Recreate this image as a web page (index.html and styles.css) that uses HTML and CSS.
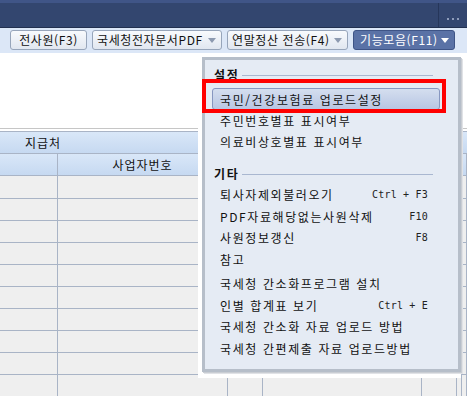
FILE: index.html
```html
<!DOCTYPE html>
<html lang="ko">
<head>
    <meta charset="UTF-8">
    <title>연말정산</title>
    <link rel="stylesheet" href="styles.css">
</head>
<body>
    <div class="titlebar">
        <div class="more"><i></i><i></i><i></i></div>
    </div>

    <div class="toolbar">
        <button class="tb-btn btn-all">전사원(F3)</button>
        <button class="tb-btn btn-pdf">국세청전자문서PDF <span class="arrow"></span></button>
        <button class="tb-btn btn-send">연말정산 전송(F4) <span class="arrow"></span></button>
        <button class="tb-btn btn-func">기능모음(F11) <span class="arrow"></span></button>
    </div>

    <div class="blank"></div>

    <div class="sheet">
        <div class="row head-top"><span class="payee">지급처</span></div>
        <div class="row head-sub">
            <div class="cell"></div>
            <div class="cell center">사업자번호</div>
            <div class="cell"></div><div class="cell"></div><div class="cell"></div><div class="cell"></div><div class="cell"></div>
        </div>
        <!-- 데이터 행 -->
        <div class="row data first"><div class="cell"></div><div class="cell"></div><div class="cell"></div><div class="cell"></div><div class="cell"></div><div class="cell"></div><div class="cell"></div></div>
        <div class="row data"><div class="cell"></div><div class="cell"></div><div class="cell"></div><div class="cell"></div><div class="cell"></div><div class="cell"></div><div class="cell"></div></div>
        <div class="row data"><div class="cell"></div><div class="cell"></div><div class="cell"></div><div class="cell"></div><div class="cell"></div><div class="cell"></div><div class="cell"></div></div>
        <div class="row data"><div class="cell"></div><div class="cell"></div><div class="cell"></div><div class="cell"></div><div class="cell"></div><div class="cell"></div><div class="cell"></div></div>
        <div class="row data"><div class="cell"></div><div class="cell"></div><div class="cell"></div><div class="cell"></div><div class="cell"></div><div class="cell"></div><div class="cell"></div></div>
        <div class="row data"><div class="cell"></div><div class="cell"></div><div class="cell"></div><div class="cell"></div><div class="cell"></div><div class="cell"></div><div class="cell"></div></div>
        <div class="row data"><div class="cell"></div><div class="cell"></div><div class="cell"></div><div class="cell"></div><div class="cell"></div><div class="cell"></div><div class="cell"></div></div>
        <div class="row data"><div class="cell"></div><div class="cell"></div><div class="cell"></div><div class="cell"></div><div class="cell"></div><div class="cell"></div><div class="cell"></div></div>
        <div class="row data"><div class="cell"></div><div class="cell"></div><div class="cell"></div><div class="cell"></div><div class="cell"></div><div class="cell"></div><div class="cell"></div></div>
        <div class="row data"><div class="cell"></div><div class="cell"></div><div class="cell"></div><div class="cell"></div><div class="cell"></div><div class="cell"></div><div class="cell"></div></div>
    </div>

    <!-- 기능모음 드롭다운 -->
    <div class="popup">
        <div class="menu">
            <div class="menu-head">설정</div>
            <div class="menu-item active">국민/건강보험료 업로드설정</div>
            <div class="menu-item short">주민번호별표 표시여부</div>
            <div class="menu-item short">의료비상호별표 표시여부</div>

            <div class="menu-head gap">기타</div>
            <div class="menu-item">퇴사자제외불러오기 <span class="key">Ctrl + F3</span></div>
            <div class="menu-item">PDF자료해당없는사원삭제 <span class="key">F10</span></div>
            <div class="menu-item">사원정보갱신 <span class="key">F8</span></div>
            <div class="menu-item">참고</div>

            <div class="menu-item sep">국세청 간소화프로그램 설치</div>
            <div class="menu-item">인별 합계표 보기 <span class="key">Ctrl + E</span></div>
            <div class="menu-item">국세청 간소화 자료 업로드 방법</div>
            <div class="menu-item">국세청 간편제출 자료 업로드방법</div>
        </div>
        <div class="mark"></div>
    </div>
</body>
</html>
```

FILE: styles.css
```css
html, body {
    margin: 0;
    padding: 0;
}

body {
    width: 467px;
    height: 396px;
    overflow: hidden;
    position: relative;
    background: #fff;
    color: #111;
    font-family: "Noto Sans CJK KR", "Noto Sans", sans-serif;
    font-size: 12px;
    letter-spacing: 1px;
}

/* 상단 바 */
.titlebar {
    height: 28px;
    box-sizing: border-box;
    background: #33466f;
    border-top: 3px solid #405587;
    border-bottom: 1px solid #22304f;
    display: flex;
    justify-content: flex-end;
}

.more {
    width: 28px;
    border-left: 1px solid #26365a;
    display: flex;
    justify-content: center;
    align-items: center;
    gap: 3px;
    padding-top: 7px;
}

.more i {
    width: 2px;
    height: 2px;
    background: #8e9cba;
}

/* 툴바 */
.toolbar {
    height: 25px;
    box-sizing: border-box;
    background: #dce7f7;
    padding: 2px 0 0 10px;
    display: flex;
    gap: 5px;
    align-items: flex-start;
}

.tb-btn {
    height: 20px;
    box-sizing: border-box;
    border: 1px solid #97a5ba;
    border-radius: 3px;
    background: linear-gradient(#f8fafd, #e1e7f0);
    font-family: inherit;
    font-size: 12px;
    letter-spacing: 0.6px;
    white-space: nowrap;
    color: #111;
    padding: 0 5px 0 4px;
    display: flex;
    align-items: center;
    justify-content: space-between;
    line-height: 18px;
}

.btn-all { width: 77px; justify-content: center; padding: 0; }
.btn-pdf { width: 130px; }
.btn-send { width: 121px; }
.btn-func {
    width: 102px;
    background: #5a72a6;
    border-color: #3e5486;
    color: #fff;
    padding-left: 6px;
}

.arrow {
    flex-shrink: 0;
    width: 0;
    height: 0;
    border-left: 4.5px solid transparent;
    border-right: 4.5px solid transparent;
    border-top: 5px solid #8d9ab0;
}

.btn-func .arrow {
    border-top-color: #fff;
}

/* 빈 영역 */
.blank {
    height: 75px;
    border-bottom: 1px solid #c6c6c6;
    margin-bottom: 2px;
}

/* 표 */
.sheet {
    border-top: 1px solid #a9b4c6;
}

.row {
    display: grid;
    grid-template-columns: 58px 170px 35px 159px 35px 5px 1fr;
    border-bottom: 1px solid #a9b4c6;
    height: 22px;
    box-sizing: border-box;
}

.head-top,
.head-sub {
    background: linear-gradient(#d9e7f8, #c6d9f1);
}

.head-top {
    display: block;
    line-height: 21px;
}

.payee {
    padding-left: 25px;
}

.head-sub .cell {
    line-height: 21px;
}

.cell {
    border-right: 1px solid #a9b4c6;
}

.center {
    text-align: center;
}

.data {
    background: #efefef;
}

.data.first {
    height: 23px;
}

/* 드롭다운 메뉴 */
.popup {
    position: absolute;
    left: 198px;
    top: 57px;
    background: #fff;
    padding: 0 0 6px 4px;
}

.menu {
    width: 259px;
    height: 315px;
    box-sizing: border-box;
    background: #e5ebf4;
    border: 3px solid #b6bec9;
    box-shadow: 1px 1px 0 #c9cdd3, 2px 2px 0 #e0e2e6;
    padding-top: 3px;
    letter-spacing: 1.6px;
}

.menu-head {
    height: 22px;
    padding-left: 9px;
    font-weight: bold;
    display: flex;
    align-items: center;
    gap: 3px;
}

.menu-head::after {
    content: "";
    flex: 1;
    height: 1px;
    margin: 2px 25px 0 0;
    background: #a9b7d0;
}

.menu-head.gap {
    margin-top: 10px;
}

.menu-item {
    height: 21.5px;
    padding: 0 30px 0 15px;
    display: flex;
    align-items: center;
    justify-content: space-between;
}

.menu-item.short {
    height: 21px;
}

.menu-item.sep {
    margin-top: 3px;
}

.menu-item.active {
    height: 22px;
    box-sizing: border-box;
    margin: 3px 18px 0 7px;
    padding-left: 7px;
    border: 1px solid #8797c0;
    border-radius: 3px;
    background: linear-gradient(#d4deef, #b8c6e3);
}

.key {
    font-family: "DejaVu Sans Mono", monospace;
    font-size: 10px;
    letter-spacing: 0.2px;
    color: #222;
}

.mark {
    position: absolute;
    left: 4px;
    top: 22px;
    width: 244px;
    height: 34px;
    box-sizing: border-box;
    border: 4px solid #ff0000;
}
```
